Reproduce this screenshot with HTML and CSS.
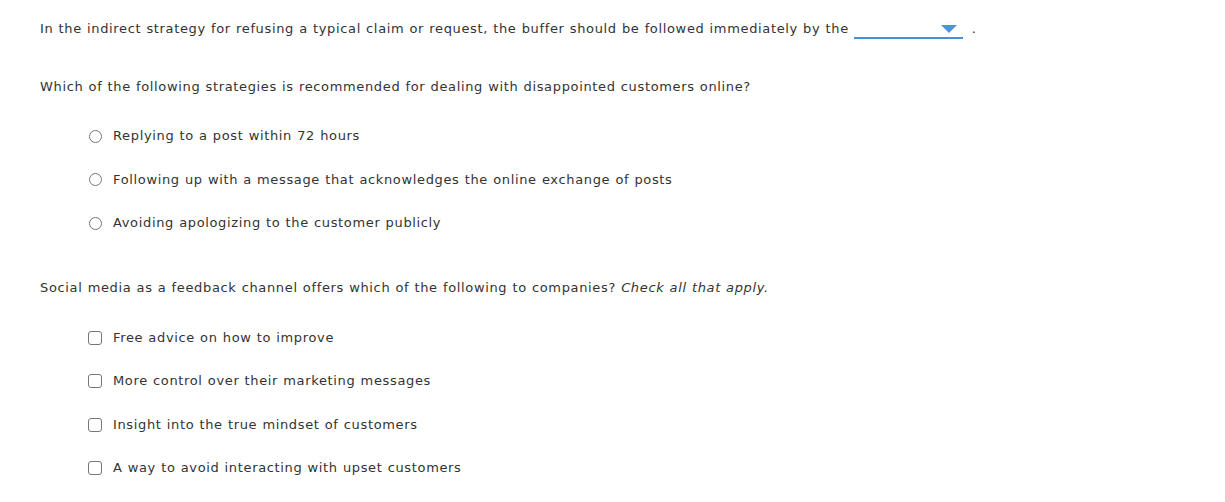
FILE: index.html
```html
<!DOCTYPE html>
<html>
<head>
<meta charset="utf-8">
<link rel="stylesheet" href="styles.css">
</head>
<body>
<div class="page">
  <div class="q q1">
    <span>In the indirect strategy for refusing a typical claim or request, the buffer should be followed immediately by the</span>
    <span class="dropdown"><span class="caret"></span></span>
    <span class="dot">.</span>
  </div>

  <div class="q q2">Which of the following strategies is recommended for dealing with disappointed customers online?</div>
  <div class="options radios">
    <div class="opt"><span class="radio"></span><span>Replying to a post within 72 hours</span></div>
    <div class="opt"><span class="radio"></span><span>Following up with a message that acknowledges the online exchange of posts</span></div>
    <div class="opt"><span class="radio"></span><span>Avoiding apologizing to the customer publicly</span></div>
  </div>

  <div class="q q3">Social media as a feedback channel offers which of the following to companies? <em>Check all that apply.</em></div>
  <div class="options checks">
    <div class="opt"><span class="check"></span><span>Free advice on how to improve</span></div>
    <div class="opt"><span class="check"></span><span>More control over their marketing messages</span></div>
    <div class="opt"><span class="check"></span><span>Insight into the true mindset of customers</span></div>
    <div class="opt"><span class="check"></span><span>A way to avoid interacting with upset customers</span></div>
  </div>
</div>
</body>
</html>
```

FILE: styles.css
```css
html, body {
  margin: 0;
  padding: 0;
  background: #ffffff;
}
body {
  font-family: "DejaVu Sans", Verdana, sans-serif;
  font-size: 13px;
  color: #333333;
  letter-spacing: 0.65px;
  word-spacing: 0.4px;
}
.page {
  padding: 19px 0 0 40px;
}
.q {
  height: 20px;
  line-height: 20px;
  white-space: nowrap;
}
.q1 {
  display: flex;
  align-items: center;
}
.dropdown {
  position: relative;
  display: inline-block;
  width: 109px;
  height: 19px;
  margin-left: 5px;
  border-bottom: 2px solid #4a8fd4;
  box-sizing: border-box;
}
.caret {
  position: absolute;
  right: 6px;
  top: 5px;
  width: 0;
  height: 0;
  border-left: 8px solid transparent;
  border-right: 8px solid transparent;
  border-top: 8px solid #4f95d6;
}
.dot {
  margin-left: 9px;
}
.q2 {
  margin-top: 38px;
}
.options {
  display: flex;
  flex-direction: column;
  padding-left: 48px;
}
.radios {
  margin-top: 29px;
  gap: 23.5px;
}
.q3 {
  margin-top: 45px;
}
.checks {
  margin-top: 30px;
  gap: 23.3px;
}
.opt {
  display: flex;
  align-items: center;
  height: 20px;
  line-height: 20px;
  white-space: nowrap;
}
.radio {
  width: 13px;
  height: 13px;
  border: 1px solid #767676;
  border-radius: 50%;
  box-sizing: border-box;
  margin-left: 1px;
  margin-right: 11px;
}
.check {
  width: 14px;
  height: 14px;
  border: 1px solid #767676;
  border-radius: 3px;
  box-sizing: border-box;
  margin-right: 11px;
}
em {
  font-style: italic;
}
```
